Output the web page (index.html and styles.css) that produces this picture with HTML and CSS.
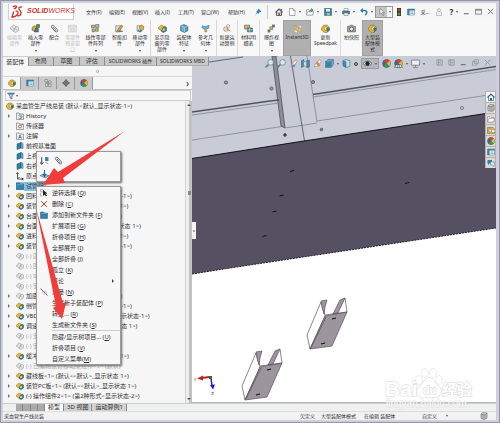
FILE: index.html
```html
<!DOCTYPE html>
<html lang="zh-CN">
<head>
<meta charset="utf-8">
<title>采血管生产线总装</title>
<link rel="stylesheet" href="styles.css">
</head>
<body>
<svg class="defs" aria-hidden="true">
  <symbol id="asm" viewBox="0 0 16 16"><path d="M1 6l5-4 4 2v4l-4 4-5-3z" fill="#e9b92e" stroke="#8c6a10"/><path d="M8 8l4-4 3 2v6l-5 3-4-2z" fill="#3f7fa6" stroke="#1f4e6e"/><path d="M9 8h3v4H8z" fill="#f5d25a"/></symbol>
  <symbol id="asmg" viewBox="0 0 16 16"><path d="M1 6l5-4 4 2v4l-4 4-5-3zM8 8l4-4 3 2v6l-5 3-4-2z" fill="#e2e2e2" stroke="#a9a9a9" stroke-width="1.3"/><path d="M4 5l4 4m2-1l3 4" stroke="#b5b5b5"/></symbol>
  <symbol id="root" viewBox="0 0 16 16"><path d="M1 7l4-5h6l4 4v5l-4 4H6L1 11z" fill="#e9b92e" stroke="#8c6a10"/><circle cx="9" cy="8" r="3" fill="#f5f6f8" stroke="#8c6a10"/><path d="M9 7l6-1v5l-4 3z" fill="#2e7596"/></symbol>
  <symbol id="plane" viewBox="0 0 16 16"><path d="M2 4l8-3v11l-8 3z" fill="#2d81a6" stroke="#17526f"/><path d="M10 1l4 2v10l-4-1z" fill="#79b5cf" stroke="#17526f"/></symbol>
  <symbol id="box" viewBox="0 0 16 16"><path d="M1 2h5l1 2h8v11H1z" fill="#f1f1f1" stroke="#777" stroke-width="1.3"/></symbol>
  <symbol id="hist" viewBox="0 0 16 16"><use href="#box"/><path d="M5 7a4 4 0 1 1 0 5M8 7v3h3" fill="none" stroke="#3c7895" stroke-width="1.5"/></symbol>
  <symbol id="sens" viewBox="0 0 16 16"><use href="#box"/><circle cx="8" cy="9" r="3" fill="none" stroke="#555" stroke-width="1.3"/><path d="M10 7l3-3" stroke="#d33" stroke-width="2"/></symbol>
  <symbol id="note" viewBox="0 0 16 16"><use href="#box"/><path d="M5 13l3-7 3 7M6 11h4" fill="none" stroke="#2c6f96" stroke-width="1.6"/></symbol>
  <symbol id="origin" viewBox="0 0 16 16"><path d="M3 2v12h11M1 4l2-3 2 3M11 12l4 2-4 2M3 14l4-4" fill="none" stroke="#333" stroke-width="1.6"/></symbol>
  <symbol id="folder" viewBox="0 0 16 16"><path d="M1 2h6l1 2h7v11H1z" fill="#2f86ad" stroke="#1d5c7c"/><path d="M2 5h12" stroke="#79bcd6"/></symbol>
  <symbol id="clip" viewBox="0 0 16 16"><path d="M3 6l7 8c3 1 5-1 3-4L7 3C4 1 1 3 3 6l6 7c2 0 2-1 1-3L5 5" fill="none" stroke="#666" stroke-width="1.5"/></symbol>
  <symbol id="insert" viewBox="0 0 16 16"><path d="M2 6l5-3 3 2v5l-4 3-4-2z" fill="#d9aa3c" stroke="#6e5515"/><path d="M8 8h5v6H6z" fill="#48799a" stroke="#264e66"/><path d="M10 1h5v5h-5z" fill="#69a04a" stroke="#333"/></symbol>
  <symbol id="window" viewBox="0 0 16 16"><path d="M1 2h14v12H1zM1 5h14" fill="#eee" stroke="#bbb"/><path d="M5 8h6v4H5z" fill="none" stroke="#bbb"/></symbol>
  <symbol id="pattern" viewBox="0 0 16 16"><g stroke="#555" stroke-width="1"><path d="M1 2h5v5H1zM8 8h5v5H8z" fill="#ddb24b"/><path d="M8 1h6v5H8zM2 9h4v5H2z" fill="#a8b8c2"/></g></symbol>
  <symbol id="screw" viewBox="0 0 16 16"><path d="M1 3h9v11H1z" fill="#d5d8da" stroke="#777"/><path d="M4 11l7-9 3 2-7 9-4 1z" fill="#e99b2c" stroke="#7f5820"/><path d="M7 12h7v2H7z" fill="#477b9d"/></symbol>
  <symbol id="move" viewBox="0 0 16 16"><path d="M2 3h8v10H2z" fill="#dedede" stroke="#6c6c6c"/><path d="M6 5l4-3 4 3-1 5-5 2z" fill="#dfb242" stroke="#7a5e18"/><path d="M3 10l4 4 3-3" fill="none" stroke="#2d81a6" stroke-width="2"/></symbol>
  <symbol id="feature" viewBox="0 0 16 16"><path d="M1 3l6-2 7 3v8l-6 3-7-3z" fill="#4e9ab8" stroke="#27627d"/><path d="M5 3v10M8 6v8M1 3l7 3 6-2" stroke="#d8ecf3" fill="none"/></symbol>
  <symbol id="geom" viewBox="0 0 16 16"><path d="M2 3l6 2 6-3v5l-6 3-6-3z" fill="#67b1ce" stroke="#2e7897"/><path d="M7 9v5h3v-4" fill="#d8af45" stroke="#866e2c"/></symbol>
  <symbol id="motion" viewBox="0 0 16 16"><circle cx="9" cy="4" r="3" fill="#eee" stroke="#888"/><circle cx="5" cy="9" r="4" fill="#dedede" stroke="#777"/><path d="M7 8l6 5" stroke="#e08b2f" stroke-width="2"/></symbol>
  <symbol id="bom" viewBox="0 0 16 16"><path d="M1 2h9v7H1z" fill="#e1b04a" stroke="#555"/><path d="M6 7h9v7H6z" fill="#4b88a8" stroke="#315a70"/><path d="M6 10h9M10 7v7" stroke="#d8e9f0"/></symbol>
  <symbol id="explode" viewBox="0 0 16 16"><path d="M9 1h5v5H9z" fill="#417f9f"/><path d="M5 5h5v5H5z" fill="#dfb242" stroke="#856616"/><path d="M1 10h5v5H1z" fill="#417f9f"/></symbol>
  <symbol id="ruler" viewBox="0 0 16 16"><path d="M2 2l12 7v5L2 7z" fill="#f1d36c" stroke="#b59842"/><path d="M3 12l4 2m5-11l2 3" stroke="#e8f2fa" stroke-width="2"/><path d="M4 4v2m3 0v2m3 0v2" stroke="#705d22"/></symbol>
  <symbol id="camera" viewBox="0 0 16 16"><path d="M1 4h4l1-2h4l1 2h4v10H1z" fill="#a3a3a3" stroke="#555"/><circle cx="8" cy="9" r="3.5" fill="#eee" stroke="#555" stroke-width="1.5"/></symbol>
  <symbol id="ball" viewBox="0 0 16 16"><circle cx="8" cy="8" r="7" fill="#286faf" stroke="#555"/><path d="M8 8L3 3a7 7 0 0 1 10 0z" fill="#d83b2e"/><path d="M8 8l5-5a7 7 0 0 1 0 10z" fill="#e5b92f"/><path d="M8 8l5 5a7 7 0 0 1-10 0z" fill="#39974a"/></symbol>
  <symbol id="scene" viewBox="0 0 16 16"><use href="#ball"/><path d="M1 15l3-5h8l3 5z" fill="#f2f2f2" stroke="#444"/><path d="M6 15l1-5m2 0l1 5" stroke="#444"/></symbol>
  <symbol id="list" viewBox="0 0 16 16"><path d="M1 2h14v12H1z" fill="#e9f1f5" stroke="#47748c"/><path d="M1 2h14v3H1zM1 5h4v9H1z" fill="#3a7fa1"/><path d="M7 8h6M7 11h6" stroke="#47748c"/></symbol>
  <symbol id="config" viewBox="0 0 16 16"><path d="M2 1h5v5H2zM9 4h5v4H9zM3 9h4v6H3zM9 10h5v5H9z" fill="#ddd" stroke="#666"/><path d="M4 6l7 5" stroke="#666"/></symbol>
  <symbol id="target" viewBox="0 0 16 16"><circle cx="8" cy="8" r="4.5" fill="none" stroke="#333" stroke-width="1.6"/><path d="M8 0v16M0 8h16" stroke="#333" stroke-width="1.4"/></symbol>
  <symbol id="funnel" viewBox="0 0 16 16"><path d="M1 2h14L10 8v6l-4-2V8z" fill="#b9cad4" stroke="#4d6a7b" stroke-width="1.3"/><path d="M2 2h12l-2 3H4z" fill="#3f83a6"/></symbol>
  <symbol id="home" viewBox="0 0 16 16"><path d="M3 8v7h10V8" fill="#fff" stroke="#32718f" stroke-width="1.5"/><path d="M1 9l7-7 7 7" fill="none" stroke="#236b8c" stroke-width="2.4"/><path d="M6 10h4v5H6z" fill="#236b8c"/></symbol>
  <symbol id="homer" viewBox="0 0 16 16"><path d="M3 8v7h10V8" fill="#b8c6ce" stroke="#444" stroke-width="1.5"/><path d="M1 9l7-7 7 7" fill="none" stroke="#236b8c" stroke-width="2.4"/><path d="M11 2h3v4h-3zM7 10h3v5H7z" fill="#c93b2e"/></symbol>
  <symbol id="doc" viewBox="0 0 16 16"><path d="M3 1h7l4 4v10H3zM10 1v4h4" fill="#fff" stroke="#777" stroke-width="1.2"/></symbol>
  <symbol id="open" viewBox="0 0 16 16"><path d="M1 3h5l2 2h6v9H1z" fill="#ececec" stroke="#777"/><path d="M1 14l3-7h11l-2 7z" fill="#fff" stroke="#777"/></symbol>
  <symbol id="openg" viewBox="0 0 16 16"><use href="#open"/><path d="M8 9V4h4M10 1l4 3-4 3" fill="none" stroke="#399448" stroke-width="2"/></symbol>
  <symbol id="save" viewBox="0 0 16 16"><path d="M1 1h14v14H1z" fill="#3e7f9d" stroke="#28566c"/><path d="M4 2h8v5H4z" fill="#e7f0f4"/><path d="M5 10h7v5H5z" fill="#9db8c6"/></symbol>
  <symbol id="print" viewBox="0 0 16 16"><path d="M4 1h8v5H4z" fill="#fff" stroke="#777"/><path d="M1 6h14v6H1z" fill="#427f9a" stroke="#315b6d"/><path d="M4 10h8v5H4z" fill="#eee" stroke="#777"/></symbol>
  <symbol id="undo" viewBox="0 0 16 16"><path d="M3 5h6c7 1 5 7 1 9" fill="none" stroke="#2a7eab" stroke-width="3"/><path d="M6 0L0 5l6 5z" fill="#2a7eab"/></symbol>
  <symbol id="cursor" viewBox="0 0 16 16"><path d="M4 1v12l3-3 3 5 2-1-3-5h4z" fill="#fff" stroke="#555"/></symbol>
  <symbol id="light" viewBox="0 0 16 16"><path d="M4 0h8v16H4z" fill="#333"/><circle cx="8" cy="4" r="3" fill="#d13c2d"/><circle cx="8" cy="12" r="3" fill="#3c9f46"/></symbol>
  <symbol id="user" viewBox="0 0 16 16"><circle cx="8" cy="4" r="3" fill="#eee" stroke="#999"/><path d="M3 15V9l3-2h4l3 2v6z" fill="#eee" stroke="#999"/></symbol>
  <symbol id="pin" viewBox="0 0 16 16"><path d="M9 1l6 6-3 1-4 4-1-2-5 5 4-6-2-1 4-4z" fill="#3585b0"/></symbol>
  <symbol id="zoomi" viewBox="0 0 16 16"><circle cx="10" cy="6" r="5" fill="#d8e9f2" stroke="#5d8195" stroke-width="1.4"/><path d="M6 10l-5 5" stroke="#5d8195" stroke-width="3"/></symbol>
  <symbol id="prev" viewBox="0 0 16 16"><path d="M3 14l3-7 7-6 2 3-6 8z" fill="#e6e9ec" stroke="#777"/><path d="M5 10h6v4H5z" fill="#5d97b3"/></symbol>
  <symbol id="section" viewBox="0 0 16 16"><path d="M1 3l4-2v12l-4 2zM10 3l5-1v12l-5 1z" fill="#3b8fb5" stroke="#286480"/><path d="M5 4l5 2v7l-5-1z" fill="#dbe6ec" stroke="#777"/></symbol>
  <symbol id="brush" viewBox="0 0 16 16"><path d="M2 14l3-7 7-6 3 3-6 8z" fill="#f5f1e8" stroke="#888"/><path d="M5 7l3-3 5 7-3 3z" fill="#e28a32"/></symbol>
  <symbol id="cube" viewBox="0 0 16 16"><path d="M1 5l4-4h10v9l-4 5H1z" fill="#72abc6" stroke="#326a85"/><path d="M1 5h10v10M11 5l4-4" fill="none" stroke="#326a85"/><path d="M2 6h8v8H2z" fill="#347fa2"/></symbol>
  <symbol id="display" viewBox="0 0 16 16"><path d="M2 3l5-2 7 2v10l-7 2-5-3z" fill="#c8dfe9" stroke="#326a85"/><path d="M2 3l5 2v10l-5-3z" fill="#3b8fb5" stroke="#326a85"/></symbol>
  <symbol id="eye" viewBox="0 0 16 16"><path d="M0 8q8-9 16 0-8 8-16 0" fill="#f8f8f8" stroke="#333"/><circle cx="8" cy="8" r="4" fill="#222"/></symbol>
  <symbol id="monitor" viewBox="0 0 16 16"><path d="M1 2h14v9H1z" fill="#eef0f2" stroke="#777" stroke-width="1.4"/><path d="M8 11v3M4 15h8" stroke="#777" stroke-width="1.5"/></symbol>
  <symbol id="panel" viewBox="0 0 16 16"><path d="M2 2h12v12H2zM6 2v12M11 6L8 8l3 2" fill="none" stroke="#888" stroke-width="1.6"/></symbol>
  <symbol id="lib" viewBox="0 0 16 16"><path d="M2 4l4-3 8 1v10l-5 3-7-2zM6 5v8M10 4v10M2 4l7 2 5-4" fill="#ccc" stroke="#666" stroke-width="1.2"/></symbol>
  <symbol id="toolbox" viewBox="0 0 16 16"><path d="M1 3h11l3 3v9H1z" fill="#dcb34d" stroke="#6e5922"/><circle cx="6" cy="9" r="3" fill="#eee" stroke="#666"/><path d="M10 8h5v4h-5z" fill="#eee"/></symbol>
  <symbol id="chat" viewBox="0 0 16 16"><path d="M1 2h9v7H5l-3 3V9H1z" fill="#3782a5"/><path d="M7 6h8v6h-1v3l-3-3H7z" fill="#dcebf2" stroke="#3c7b99"/></symbol>
  <symbol id="min" viewBox="0 0 16 16"><path d="M2 13h11" stroke="#666" stroke-width="2.4"/></symbol>
  <symbol id="max" viewBox="0 0 16 16"><path d="M1 3h14v11H1zM1 5h14" fill="none" stroke="#666" stroke-width="1.7"/></symbol>
  <symbol id="restore" viewBox="0 0 16 16"><path d="M5 2h10v8H5zM1 6h10v8H1z" fill="#d3d5de" stroke="#888" stroke-width="1.5"/></symbol>
  <symbol id="x" viewBox="0 0 16 16"><path d="M2 2l12 12M14 2L2 14" stroke="currentColor" stroke-width="2"/></symbol>
  <symbol id="swap" viewBox="0 0 16 16"><path d="M3 2v12M0 11l3 4 3-4" fill="none" stroke="#333" stroke-width="1.6"/><path d="M9 2h6v7H9z" fill="#377fa6"/><path d="M9 11l6 3" stroke="#777"/></symbol>
  <symbol id="fix" viewBox="0 0 16 16"><path d="M0 10l6-3 10 3-6 4z" fill="#88bdd2" stroke="#2c728f"/><path d="M8 0v9M5 7l3 4 3-4" fill="none" stroke="#27728f" stroke-width="2"/></symbol>
  <symbol id="select" viewBox="0 0 16 16"><path d="M1 1h5v5H1z" fill="none" stroke="#777"/><path d="M6 2v12l3-3 3 4 2-2-3-4h4z" fill="#222"/><path d="M1 8v6h4" fill="none" stroke="#777"/></symbol>
  <symbol id="measure" viewBox="0 0 16 16"><path d="M1 1l14 14" stroke="#333" stroke-width="1.5"/><path d="M4 9l6-3 4 3-6 4z" fill="none" stroke="#999"/></symbol>
</svg>

<div class="window">
  <header class="titlebar">
    <div class="brand"><svg viewBox="0 0 14 14"><path d="M2 2q4-2 4 0-1 2-3 2M5 6q4 1 2 4-2 3-6 3l2-6M12 2q-5 0-3 3 3 3 1 6l-3 1" fill="none" stroke="#d92d2c" stroke-width="1.4"/></svg><span><b>SOLID</b>WORKS</span></div>
    <nav class="menubar">
      <button>文件(F)</button><button>编辑(E)</button><button>视图(V)</button><button>插入(I)</button><button>工具(T)</button><button>窗口(W)</button><button>帮助(H)</button>
      <button class="pin" aria-label="固定"><svg><use href="#pin"/></svg></button>
    </nav>
    <div class="quick">
      <button><svg><use href="#homer"/></svg></button>
      <button class="drop"><svg><use href="#doc"/></svg></button>
      <button class="drop"><svg><use href="#openg"/></svg></button>
      <button class="drop"><svg><use href="#save"/></svg></button>
      <button class="drop"><svg><use href="#print"/></svg></button>
      <button class="drop"><svg><use href="#undo"/></svg></button>
      <button class="drop picked"><svg><use href="#cursor"/></svg></button>
      <button><svg><use href="#light"/></svg></button>
      <button><svg><use href="#list"/></svg></button>
      <span class="search">采...</span>
      <button><svg><use href="#user"/></svg></button>
      <button class="drop help">?</button>
    </div>
    <div class="wincontrols"><button><svg><use href="#min"/></svg></button><button><svg><use href="#max"/></svg></button><button><svg><use href="#x"/></svg></button></div>
  </header>

  <div class="ribbon">
    <button class="off"><svg><use href="#asmg"/></svg><span>编辑零<br>部件</span></button>
    <button class="more"><svg><use href="#insert"/></svg><span>插入零<br>部件</span></button>
    <button><svg><use href="#clip"/></svg><span>配合</span></button>
    <button class="off"><svg><use href="#window"/></svg><span>零部件<br>预览窗<br>口</span></button>
    <button class="more"><svg><use href="#pattern"/></svg><span>线性零部<br>件阵列</span></button>
    <button><svg><use href="#screw"/></svg><span>智能扣<br>件</span></button>
    <button class="more sep"><svg><use href="#move"/></svg><span>移动零<br>部件</span></button>
    <button><svg><use href="#asm"/></svg><span>显示隐<br>藏的零<br>部件</span></button>
    <button class="more"><svg><use href="#feature"/></svg><span>装配体<br>特征</span></button>
    <button class="more sep"><svg><use href="#geom"/></svg><span>参考几<br>何体</span></button>
    <button class="sep"><svg><use href="#motion"/></svg><span>新建运<br>动算例</span></button>
    <button class="sep"><svg><use href="#bom"/></svg><span>材料明<br>细表</span></button>
    <button class="more"><svg><use href="#explode"/></svg><span>爆炸视<br>图</span></button>
    <button class="on"><svg><use href="#ruler"/></svg><span>Instant3D</span></button>
    <button class="sep"><svg><use href="#root"/></svg><span>更新<br>Speedpak</span></button>
    <button><svg><use href="#camera"/></svg><span>拍快照</span></button>
    <button class="on"><svg><use href="#root"/></svg><span>大型装<br>配体模<br>式</span></button>
  </div>

  <main class="work">
    <section class="left">
      <nav class="tabs">
        <button class="active">装配体</button><button>布局</button><button>草图</button><button>评估</button><button class="wide">SOLIDWORKS 插件</button><button class="wide">SOLIDWORKS MBD</button>
      </nav>
      <div class="splitter"><i></i></div>
      <div class="managers">
        <button class="active"><svg><use href="#root"/></svg></button><button><svg><use href="#list"/></svg></button><button><svg><use href="#config"/></svg></button><button><svg><use href="#target"/></svg></button><button><svg><use href="#ball"/></svg></button>
        <span>›</span>
      </div>
      <div class="filter"><svg><use href="#funnel"/></svg><i></i></div>
      <div class="treewrap">
        <ul class="tree">
          <li class="top"><svg><use href="#root"/></svg>采血管生产线总装 (默认&lt;默认_显示状态-1&gt;)</li>
          <li class="exp"><svg><use href="#hist"/></svg>History</li>
          <li><svg><use href="#sens"/></svg>传感器</li>
          <li class="exp"><svg><use href="#note"/></svg>注解</li>
          <li><svg><use href="#plane"/></svg>前视基准面</li>
          <li><svg><use href="#plane"/></svg>上视</li>
          <li><svg><use href="#plane"/></svg>右视</li>
          <li><svg><use href="#origin"/></svg>原点</li>
          <li class="exp selected"><svg><use href="#folder"/></svg><span>试管组</span></li>
          <li class="exp"><svg><use href="#asm"/></svg>回料组件&lt;1&gt; (默认&lt;默认&gt;_显示状态-1&gt;)</li>
          <li class="exp"><svg><use href="#asm"/></svg>装管组件&lt;1&gt; (默认&lt;默认_显示状态-1&gt;)</li>
          <li class="exp"><svg><use href="#asm"/></svg>台面板&lt;1&gt; (默认&lt;默认_显示状态 1&gt;)</li>
          <li class="exp"><svg><use href="#asm"/></svg>台面板组件&lt;1&gt; (默认&lt;&lt;默认&gt;_显示状态 1&gt;)</li>
          <li class="exp"><svg><use href="#asm"/></svg>进料组件&lt;1&gt; (默认&lt;默认_显示状态-1&gt;)</li>
          <li class="exp"><svg><use href="#asm"/></svg>装管组件&lt;2&gt; (默认&lt;默认&gt;_显示状态-1&gt;)</li>
          <li class="dim"><svg><use href="#asmg"/></svg>(-) 固定支架及安装板组件&lt;1&gt; (默认)</li>
          <li class="dim"><svg><use href="#asmg"/></svg>(-) 回料支架及安装板组件&lt;1&gt; (默认)</li>
          <li class="dim"><svg><use href="#asmg"/></svg>(-) S型支架&lt;1&gt; (默认)</li>
          <li class="dim"><svg><use href="#asmg"/></svg>(-) 安装支架&lt;1&gt; (默认)</li>
          <li class="exp"><svg><use href="#asmg"/></svg>加底板&lt;1&gt; (默认&lt;默认_显示状态-1&gt;)</li>
          <li class="exp"><svg><use href="#asm"/></svg>倒管组件&lt;1&gt; (默认&lt;默认&gt;_显示状态-1&gt;)</li>
          <li class="exp"><svg><use href="#asm"/></svg>VBD采血管组件&lt;1&gt; (默认&lt;默认&gt;_显示状态-1&gt;)</li>
          <li class="exp"><svg><use href="#asm"/></svg>调速组件板&lt;1&gt; (默认&lt;默认&gt;_显示状态 1&gt;)</li>
          <li class="dim"><svg><use href="#asmg"/></svg>(-) 安装支架&lt;2&gt; (默认)</li>
          <li class="dim"><svg><use href="#asmg"/></svg>(-) 安装支架&lt;3&gt; (默认)</li>
          <li class="exp"><svg><use href="#asm"/></svg>缓冲板&lt;1&gt; (默认&lt;&lt;默认&gt;_显示状态 1&gt;)</li>
          <li class="dim"><svg><use href="#asmg"/></svg>(-) 已编辑试管移动架组件&lt;1&gt; (默认)</li>
          <li class="exp"><svg><use href="#asm"/></svg>藏线板&lt;1&gt; (默认&lt;&lt;默认&gt;_显示状态 1&gt;)</li>
          <li class="exp"><svg><use href="#asm"/></svg>装管PC板&lt;1&gt; (默认&lt;&lt;默认&gt;_显示状态 1&gt;)</li>
          <li class="exp"><svg><use href="#asm"/></svg>(-) 操作组件2&lt;1&gt; (第2种形式&lt;显示状态-2&gt;)</li>
        </ul>
        <div class="scroll"><i class="up"></i><i class="grip"></i><i class="down"></i></div>
      </div>

      <div class="quickbox"><svg><use href="#swap"/></svg><svg><use href="#clip"/></svg><svg><use href="#fix"/></svg></div>
      <div class="context">
        <button><svg><use href="#select"/></svg>逆转选择 (<u>Q</u>)</button>
        <button><svg class="red"><use href="#x"/></svg>删除 (<u>C</u>)</button>
        <button><svg><use href="#folder"/></svg>添加到新文件夹 (<u>F</u>)</button>
        <button>扩展项目 (<u>G</u>)</button>
        <button>折叠项目 (<u>H</u>)</button>
        <button>全部展开 (<u>I</u>)</button>
        <button>全部折叠 (<u>J</u>)</button>
        <button>孤立 (<u>K</u>)</button>
        <button class="sub">评论</button>
        <button><svg><use href="#measure"/></svg>测量 (<u>N</u>)</button>
        <button>生成新子装配体 (<u>P</u>)</button>
        <button>转至... (<u>R</u>)</button>
        <button>生成新文件夹 (<u>S</u>)</button>
        <hr>
        <button>隐藏/显示树项目... (<u>U</u>)</button>
        <button>折叠项目 (<u>V</u>)</button>
        <button>自定义菜单(<u>M</u>)</button>
      </div>
    </section>

    <section class="view">
      <svg class="scene" viewBox="192 57 304 346" preserveAspectRatio="xMinYMin slice">
        <path d="M192 57h304v347H192z" fill="#fff"/>
        <path d="M192 57h304v58L192 161z" fill="#c9ccd6"/>
        <path d="M192 159.5L304 142l192-29v116L230 269l-38 6z" fill="#555163"/>
        <g fill="none" stroke="#777b85" stroke-width=".7">
          <path d="M192 116l87-12M192 141l90-13.5M285 129l32-5M317 122l168-25.5M313 98l183-27.500M307 57l10 66"/>
        </g>
        <path d="M290.500 57l14 85M209 63l34-5" fill="none" stroke="#4b4d56" stroke-width=".8"/>
        <path d="M272 57h4l9 72-4-2z" fill="#8b8e99" stroke="#50525c" stroke-width=".8"/>
        <path d="M192 113l78-11 9-1M313 95.500L496 67.500" fill="none" stroke="#50535f" stroke-width="1.300"/>
        <path d="M192 159.500L304 142l192-29" fill="none" stroke="#14131a" stroke-width="1.200"/>
        <path d="M192 275l38-6 266-40" fill="none" stroke="#242129" stroke-width="1" stroke-dasharray="2 1"/>
        <g fill="#92959d" stroke="#555861" stroke-width=".8"><circle cx="226" cy="83.500" r="1.600"/><circle cx="271.500" cy="89.500" r="1.600"/><circle cx="313" cy="83" r="1.600"/><circle cx="285" cy="136" r="1.400" fill="#333"/><circle cx="321.500" cy="130.500" r="1.300" fill="#777"/><circle cx="462" cy="109" r="1.500" fill="#dfe4e4"/></g>
        <path d="M290 172.500l4-1M279.500 197l4-1M272.500 213l4-1M262.500 237.500l4-1M405 184.500l4-1" stroke="#15131b" stroke-width="1.200"/>
        <g id="bracket" stroke="#555259" stroke-width=".7" stroke-linejoin="round">
          <path d="M321 303l-14 33 3 14 15-33z" fill="#fff"/>
          <path d="M321 302l6-1-2 7-1 7-2-7z" fill="#9c959d"/>
          <path d="M333 315l7-14 5-2-7 15z" fill="#9c959d"/>
          <path d="M345 299l2 14" fill="none"/>
          <path d="M325 317l22-4-15 34-22 3z" fill="#9c959d"/>
          <path d="M326 318l-15 31M325 316l22-3" fill="none"/>
          <path d="M332 320l4-1M321 345l4-1" stroke="#111" stroke-width="1.200"/>
        </g>
        <use href="#bracket" x="-65" y="51"/>
        <path d="M210 378l-9 1" stroke="#b92020" stroke-width="2"/><path d="M203 376.500l-6 3 6 2z" fill="#c42020"/>
        <path d="M211 379l1 8" stroke="#2424c4" stroke-width="1.500"/><path d="M210 386l5-.500-2 5z" fill="#1c1cc0"/><path d="M209 377h3v3h-3z" fill="#35663c"/>
        <text x="194" y="382" font-size="5" fill="#e55">x</text><text x="211" y="396" font-size="6" fill="#44d">z</text>
      </svg>
      <div class="hud">
        <svg><use href="#zoomi"/></svg><svg><use href="#zoomi"/></svg><svg><use href="#prev"/></svg><svg><use href="#section"/></svg><svg><use href="#brush"/></svg><svg><use href="#cube"/></svg><i></i><svg><use href="#display"/></svg><b></b><span class="picked"><svg><use href="#eye"/></svg><i></i></span><svg><use href="#ball"/></svg><svg><use href="#scene"/></svg><i></i><svg><use href="#monitor"/></svg><i></i>
      </div>
      <div class="docwin"><svg><use href="#panel"/></svg><svg><use href="#panel"/></svg><svg><use href="#min"/></svg><svg><use href="#restore"/></svg><svg><use href="#x"/></svg></div>
      <div class="taskpane"><button class="active"><svg><use href="#home"/></svg></button><button><svg><use href="#lib"/></svg></button><button><svg><use href="#open"/></svg></button><button><svg><use href="#toolbox"/></svg></button><button><svg><use href="#ball"/></svg></button><button><svg><use href="#list"/></svg></button><button><svg><use href="#chat"/></svg></button></div>
      <button class="handle" aria-label="折叠面板"></button>
    </section>
  </main>

  <nav class="sheets"><span class="steps"><i></i><i></i><i></i><i></i></span><button class="active">模型</button><button>3D 视图</button><button>运动算例1</button></nav>
  <footer class="status"><span class="grow">采血管生产线总装</span><span class="def">欠定义</span><span class="mode">大型装配体模式</span><span class="edit">在编辑 装配体</span><span class="custom">自定义</span><i></i><svg><use href="#lib"/></svg></footer>

  <svg class="arrows" viewBox="0 0 130 320"><path d="M125 131L63 178l2 5-22 2 11-17 4 4z" fill="#f23b3b"/><path d="M36 208l27 95 3 0-4 16-9-11 3-2z" fill="#f23b3b"/></svg>
  <svg class="watermark" viewBox="0 0 92 44">
    <g fill="#fff" stroke="#d9d9d9" stroke-width="1.400" paint-order="stroke">
      <text x="1" y="30" font-size="21" font-weight="700">Bai</text>
      <ellipse cx="35" cy="14" rx="3" ry="4"/><ellipse cx="41" cy="7" rx="3" ry="4"/><ellipse cx="49" cy="7" rx="3" ry="4"/><ellipse cx="55" cy="14" rx="3" ry="4"/>
      <path d="M45 12c5 0 5 6 10 9 4 4 1 10-4 10H39c-5 0-8-6-4-10 5-3 5-9 10-9z"/>
      <text x="39" y="28" font-size="11" font-weight="700">du</text>
      <text x="58" y="29" font-size="15" font-weight="700">经验</text>
      <text x="2" y="41" font-size="10" stroke-width=".8">jingyan.baidu.com</text>
    </g>
  </svg>
</div>
</body>
</html>
```

FILE: styles.css
```css
* { box-sizing: border-box; }
body {
  margin: 0;
  font: 5px/6px "Noto Sans", "Noto Sans CJK SC", sans-serif;
  color: #303030;
  background: #cfd0df;
}
button {
  display: block;
  margin: 0;
  padding: 0;
  border: 0;
  font: inherit;
  color: inherit;
  background: none;
  white-space: nowrap;
}
svg { display: block; width: 8px; height: 8px; flex: none; }
ul { margin: 0; padding: 0; list-style: none; }
.defs { position: absolute; width: 0; height: 0; }

.window {
  position: relative;
  display: flex;
  flex-direction: column;
  min-height: 100vh;
  border: 3px solid #cfd0df;
  border-right-width: 4px;
  outline: 1px solid #9697a3;
  outline-offset: -1px;
  background: #f6f6f7;
}

/* Title bar */
.titlebar { display: flex; align-items: center; height: 17px; }
.brand {
  display: flex;
  align-items: center;
  gap: 3px;
  width: 66px;
  height: 16px;
  margin-left: 5px;
  padding-left: 2px;
  border: 1px solid #d0d0d2;
  border-top: 0;
  background: #fff;
  color: #d92d2c;
  font: italic 7px/10px "Liberation Sans", sans-serif;
}
.brand svg { width: 13px; height: 13px; }
.menubar { display: flex; align-items: center; margin-left: 12px; height: 14px; border-right: 1px solid #ccc; }
.menubar button { width: 23px; text-align: left; }
.menubar button:nth-child(6) { width: 27px; }
.menubar .pin { width: 13px; }
.menubar button:nth-child(7) { width: 26px; }
.quick { display: flex; flex: 1; align-items: center; margin-left: 5px; }
.quick button { display: flex; align-items: center; justify-content: center; width: 12px; height: 12px; }
.quick .drop { width: 18px; gap: 3px; }
.drop::after, .hud i, .status i, .filter i {
  content: "";
  border: 1px solid transparent;
  border-top: 2px solid #555;
  border-bottom: 0;
}
.quick .picked { border: 1px solid #999; background: linear-gradient(90deg, #c5c5c5 11px, #f5f5f5 11px); }
.quick .help { font: 700 8px/10px "Noto Sans", sans-serif; }
.search { width: 16px; text-align: center; }
.wincontrols { display: flex; gap: 5px; padding-right: 2px; color: #666; }
.wincontrols svg { width: 7px; height: 7px; }

/* Command ribbon */
.ribbon {
  display: grid;
  grid-template-columns: 23px 19px 18px 19px 27px 21px 21px 22px 22px 22px 21px 22px 23px 28px 30px 21px 21px;
  height: 36px;
  background: #f8f8f8;
}
.ribbon button {
  position: relative;
  display: flex;
  flex-direction: column;
  align-items: center;
  justify-content: flex-start;
  gap: 1px;
  padding-top: 4px;
}
.ribbon svg { width: 9px; height: 9px; }
.ribbon .sep { border-right: 1px solid #d8d8d8; }
.ribbon .off { color: #bdbdbd; }
.ribbon .on { background: #b0b0b0; border: 1px solid #a0a0a0; padding-top: 3px; }
.ribbon .more::after {
  content: "";
  position: absolute;
  bottom: 4px;
  border: 1px solid transparent;
  border-top: 2px solid #444;
  border-bottom: 0;
}

/* Work area */
.work { display: flex; flex: 1; }
.left { position: relative; display: flex; flex-direction: column; width: 189px; flex: none; }
.tabs { display: flex; position: relative; z-index: 1; width: 206px; height: 10px; border-top: 1px solid #ccc; }
.tabs button {
  flex: 1;
  border-right: 1px solid #8f8f8f;
  border-bottom: 1px solid #b0b0b0;
  background: #c8c8c8;
  font-size: 6px;
  line-height: 8px;
}
.tabs .wide { flex: 0 0 52px; font-size: 5px; }
.tabs .active { background: #f6f6f7; border-bottom: 0; }
.splitter { display: flex; align-items: center; justify-content: center; height: 11px; border-bottom: 1px solid #d4d4d4; }
.splitter i { width: 3px; height: 3px; border: 1px solid #aaa; border-radius: 50%; }
.managers { display: flex; align-items: center; height: 13px; border-bottom: 1px solid #c4c4c4; }
.managers button { display: flex; align-items: center; justify-content: center; width: 18px; height: 12px; border-right: 1px solid #999; background: #c9c9c9; }
.managers .active { background: #f6f6f7; }
.managers span { margin-left: auto; padding-right: 3px; font-size: 10px; }
.filter { display: flex; align-items: center; gap: 1px; height: 11px; margin: 0 1px 0 2px; padding-left: 1px; border: 1px solid #ccc; }
.treewrap { display: flex; flex: 1; }
.tree { flex: 1; min-width: 0; font-size: 6px; }
.tree li { position: relative; display: flex; align-items: center; gap: 2px; height: 10px; padding-left: 13px; white-space: nowrap; }
.tree .top { padding-left: 3px; }
.tree .dim { color: #aaa; }
.tree .exp::before {
  content: "";
  position: absolute;
  left: 5px;
  border: 2px solid transparent;
  border-left-color: #777;
  border-right: 0;
}
.tree .selected { gap: 0; }
.tree .selected svg, .tree .selected span { background: #8bbfe0; }
.tree .selected span { line-height: 9px; padding: 0 2px; }
.scroll { display: flex; flex-direction: column; align-items: center; justify-content: space-between; width: 7px; padding: 3px 0; border-left: 1px solid #d5d5d5; background: linear-gradient(90deg, #eee 3px, #c3c3c3 3px); }
.scroll i { border: 2px solid transparent; }
.scroll .up { border-bottom-color: #555; border-top: 0; }
.scroll .down { border-top-color: #555; border-bottom: 0; }
.scroll .grip { width: 3px; height: 4px; margin-bottom: 118px; border: 0; background: #888; }

/* Pop-up menus */
.quickbox, .context { position: absolute; z-index: 3; left: 33px; width: 85px; border: 1px solid #999; background: #f7f7f7; box-shadow: 1px 1px 2px #666; }
.quickbox { top: 95px; display: grid; grid-template-columns: 9px 9px; gap: 5px; padding: 4px 3px; height: 31px; }
.quickbox svg { width: 9px; height: 9px; }
.context { top: 130px; font-size: 6px; }
.context button { position: relative; display: flex; align-items: center; width: 100%; height: 11px; padding-left: 15px; white-space: pre; }
.context svg { position: absolute; left: 3px; }
.context .red { color: #dc3b25; }
.context hr { margin: 0 0 0 15px; border: 0; border-top: 1px solid #ccc; }
.context .sub::after { content: ""; margin-left: auto; margin-right: 6px; border: 2px solid transparent; border-left-color: #444; border-right: 0; }

/* Graphics area */
.view { position: relative; flex: 1; min-width: 0; background: #fff; border-bottom: 1px solid #bbb; }
.scene { position: absolute; inset: 0; width: 100%; height: 100%; font-family: "Liberation Sans", sans-serif; }
.hud { position: absolute; left: 73px; top: 2px; display: flex; align-items: center; gap: 3px; }
.hud svg { width: 9px; height: 9px; }
.hud b { width: 4px; height: 4px; border: 1px solid #555; border-radius: 50%; background: #888; }
.hud .picked { display: flex; align-items: center; gap: 3px; width: 18px; height: 11px; padding: 0 1px; border: 1px solid #999; background: #b5b6bd; }
.docwin { position: absolute; right: 5px; top: 3px; display: flex; gap: 5px; color: #999; }
.docwin svg { width: 7px; height: 7px; }
.taskpane { position: absolute; right: 0; top: 35px; width: 11px; }
.taskpane button { display: flex; align-items: center; justify-content: center; width: 100%; height: 11px; border: 1px solid #b3b0ae; border-bottom: 0; background: #dcd9d6; }
.taskpane .active { background: #f8f8f8; }
.handle { position: absolute; left: 0; top: 166px; width: 4px; height: 17px; background: #f4f4f4; }
.handle::after { content: ""; display: block; width: 2px; height: 2px; margin: auto; background: #aaa; }

/* Sheet tabs and status bar */
.sheets { display: flex; height: 8px; padding-left: 13px; border-top: 1px solid #ccc; background: #eff1f1; font-size: 6px; line-height: 7px; }
.sheets button { padding: 0 3px; border-right: 1px solid #888; background: #d2d2d2; line-height: 7px; }
.sheets .active { background: #fff; }
.steps { display: flex; width: 29px; background: #aaa; }
.steps i { flex: 1; border-right: 1px solid #888; }
.status { display: flex; align-items: center; height: 9px; padding: 0 8px 0 1px; border-top: 1px solid #ddd; background: #f2f2f2; }
.grow { flex: 1; }
.def { width: 21px; }
.mode { width: 43px; }
.edit { width: 58px; }
.custom { width: 24px; }
.status svg { margin-left: 32px; }

/* Annotation layer */
.arrows { position: absolute; z-index: 4; left: -3px; top: -3px; width: 130px; height: 320px; pointer-events: none; }
.watermark { position: absolute; right: 20px; bottom: 10px; width: 92px; height: 44px; opacity: .75; pointer-events: none; font-family: "Liberation Sans", "Noto Sans CJK SC", sans-serif; }
```
